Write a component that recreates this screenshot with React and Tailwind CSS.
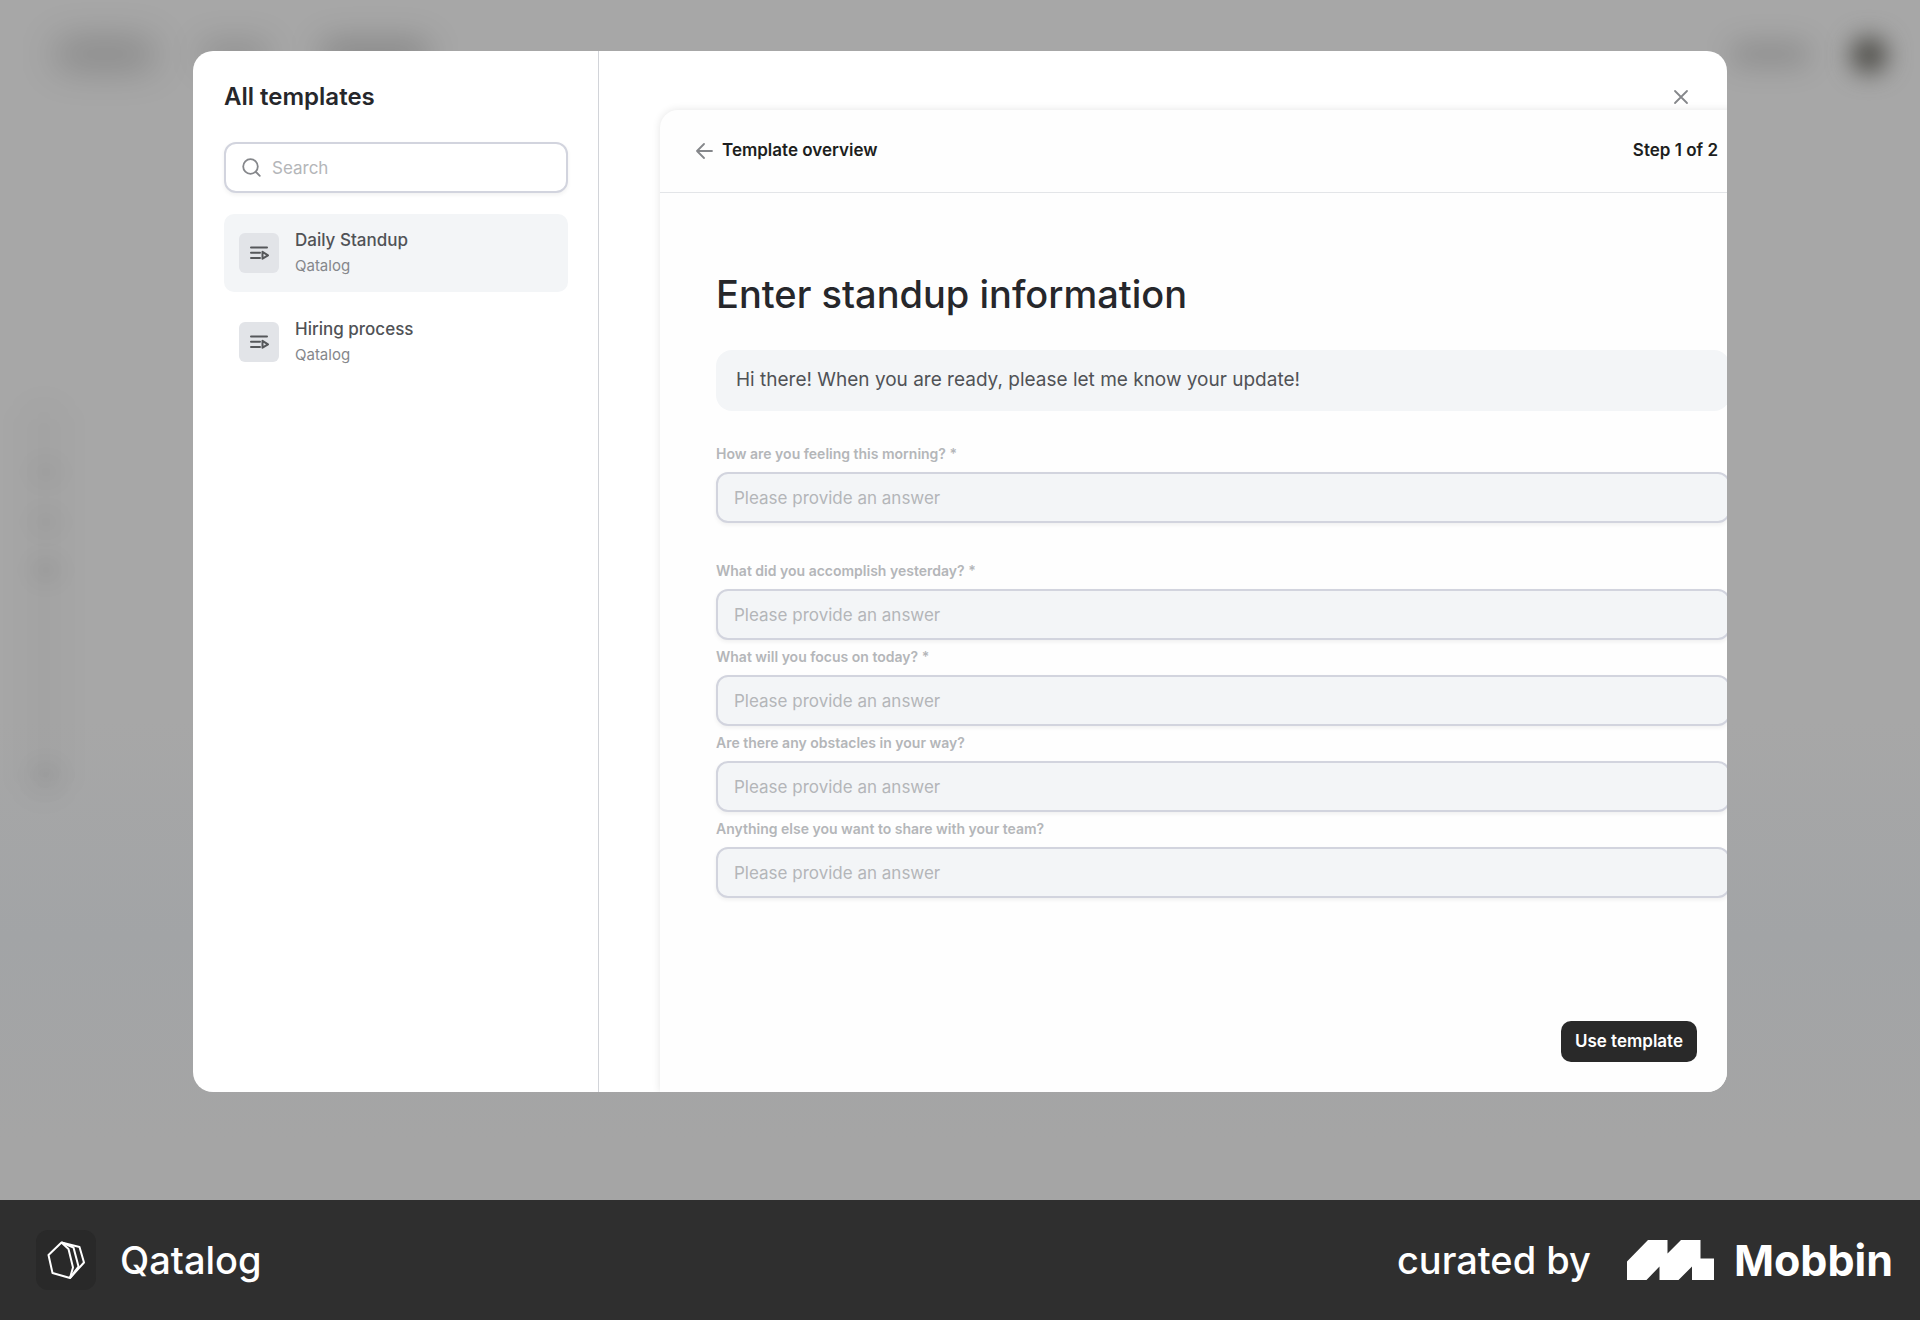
import React from "react";

const questions = [
  { id: "feeling", label: "How are you feeling this morning? *", gap: "mb-[38px]" },
  { id: "accomplish", label: "What did you accomplish yesterday? *", gap: "mb-[7px]" },
  { id: "focus", label: "What will you focus on today? *", gap: "mb-[7px]" },
  { id: "obstacles", label: "Are there any obstacles in your way?", gap: "mb-[7px]" },
  { id: "anything", label: "Anything else you want to share with your team?", gap: "" },
];

const templates = [
  { name: "Daily Standup", owner: "Qatalog", active: true },
  { name: "Hiring process", owner: "Qatalog", active: false },
];

function PlaylistIcon() {
  return (
    <svg width="20" height="20" viewBox="0 0 20 20" fill="none" stroke="#55575a" strokeWidth="2" aria-hidden="true">
      <path d="M2 4.500h16M2 9.700h9M2 14.900h9" strokeLinecap="round" />
      <path d="M13.500 8.900v6.800l5.500-3.400z" strokeLinejoin="round" />
    </svg>
  );
}

function Backdrop() {
  return (
    <div className="pointer-events-none absolute inset-0 overflow-hidden" aria-hidden="true">
      <div className="absolute left-[55px] top-[40px] h-7 w-[100px] rounded-full bg-black/20 blur-[18px]" />
      <div className="absolute left-[200px] top-[42px] h-6 w-[70px] rounded-full bg-black/15 blur-[16px]" />
      <div className="absolute left-[320px] top-[40px] h-7 w-[110px] rounded-full bg-black/20 blur-[16px]" />
      <div className="absolute right-[110px] top-[42px] h-6 w-[80px] rounded-full bg-black/15 blur-[14px]" />
      <div className="absolute right-[33px] top-[37px] h-9 w-9 rounded-full bg-[#4b4a45] blur-[12px]" />
      <div className="absolute left-[20px] top-[400px] h-[400px] w-12 rounded-full bg-black/[0.02] blur-[14px]" />
      <div className="absolute left-[32px] top-[460px] h-6 w-7 rounded-full bg-black/[0.03] blur-[10px]" />
      <div className="absolute left-[32px] top-[510px] h-6 w-7 rounded-full bg-black/[0.03] blur-[10px]" />
      <div className="absolute left-[32px] top-[558px] h-6 w-7 rounded-full bg-black/[0.05] blur-[10px]" />
      <div className="absolute left-[32px] top-[763px] h-6 w-7 rounded-full bg-black/[0.05] blur-[10px]" />
    </div>
  );
}

function Sidebar() {
  return (
    <aside className="w-[406px] shrink-0 border-r border-[#d2d4d9] pl-[31px] pr-[30px] pt-[30px]">
      <h2 className="text-2xl font-semibold text-[#26272b]">All templates</h2>
      <div className="relative mt-[29px]">
        <svg className="absolute left-[18px] top-4 z-10" width="19" height="19" viewBox="0 0 19 19" fill="none" stroke="#85878b" strokeWidth="1.8" strokeLinecap="round" aria-hidden="true">
          <circle cx="8.5" cy="8.5" r="7.3" />
          <path d="M14 14l3.8 3.8" />
        </svg>
        <input aria-label="Search" type="text" placeholder="Search" className="block h-[51px] w-full rounded-xl border-2 border-[#d2d4de] bg-white pl-[46px] pr-4 text-[17px] text-[#26272b] shadow-[0_2px_4px_rgba(0,0,0,0.06)] outline-none placeholder:text-[#b4b6b9]" />
      </div>
      <ul className="mt-[21px] flex flex-col gap-[11px]">
        {templates.map((t) => (
          <li key={t.name}>
            <button type="button" className={`flex h-[78px] w-full items-center gap-4 rounded-[10px] px-[15px] text-left ${t.active ? "bg-[#f3f5f7]" : ""}`}>
              <span className="flex size-10 items-center justify-center rounded-md bg-[#e2e4e8]">
                <PlaylistIcon />
              </span>
              <span className="flex flex-col">
                <span className="text-[17px] font-medium leading-[26px] text-[#505256]">{t.name}</span>
                <span className="text-[15px] leading-[26px] text-[#85878b]">{t.owner}</span>
              </span>
            </button>
          </li>
        ))}
      </ul>
    </aside>
  );
}

function Preview() {
  return (
    <section className="w-[calc(100%+40px)] flex-1 rounded-tl-[18px] bg-[#fefefe] shadow-[0_0_8px_rgba(0,0,0,0.11)]">
      <header className="flex h-[83px] items-center justify-between border-b border-[#e3e5e8] pl-[36px] pr-[49px] text-[17px] font-semibold text-[#1d1e20]">
        <button type="button" className="flex items-center gap-[9px]">
          <svg width="17" height="16" viewBox="0 0 17 16" fill="none" stroke="#85878b" strokeWidth="1.8" strokeLinecap="round" strokeLinejoin="round" aria-hidden="true">
            <path d="M16 8H1M8 1L1 8l7 7" />
          </svg>
          Template overview
        </button>
        <span>Step 1 of 2</span>
      </header>
      <div className="pl-[56px] pr-[37px] pt-[76px]">
        <h1 className="text-[38px] font-medium leading-[50px] text-[#26272b]">Enter standup information</h1>
        <p className="mt-[31px] flex h-[61px] items-center rounded-2xl bg-[#f3f5f7] px-5 text-[19px] text-[#505256]">
          Hi there! When you are ready, please let me know your update!
        </p>
        <form className="mt-[33px]">
          {questions.map((q) => (
            <div key={q.id} className={q.gap}>
              <label htmlFor={q.id} className="mb-2 block text-sm font-semibold leading-5 text-[#b4b6b9]">{q.label}</label>
              <input id={q.id} type="text" placeholder="Please provide an answer" className="block h-[51px] w-full rounded-xl border-2 border-[#d2d4de] bg-[#f3f5f7] px-4 text-[17px] shadow-[0_2px_4px_rgba(0,0,0,0.06)] outline-none placeholder:text-[#b4b6b9]" />
            </div>
          ))}
        </form>
      </div>
    </section>
  );
}

function Footer() {
  return (
    <footer className="flex h-[120px] items-center justify-between bg-[#2f2f2f] pl-[36px] pr-[27px] text-[38px] font-medium text-white">
      <div className="flex items-center gap-6">
        <span className="flex size-[60px] items-center justify-center rounded-xl bg-[#292929]">
          <svg width="38" height="38" viewBox="0 0 38 38" fill="none" stroke="white" strokeWidth="2" strokeLinejoin="round" role="img" aria-label="Qatalog logo">
            <path d="M14.500 1.500L1.500 14l4 18 17.500 5 3-10.500L21.500 8z" />
            <path d="M14.500 1.500L26.500 6.500l5 19L23 37" />
            <path d="M14.500 1.500L32.500 6l4.500 15.500L23 37" />
          </svg>
        </span>
        <span>Qatalog</span>
      </div>
      <div className="flex items-center">
        <span>curated by</span>
        <svg className="ml-9" width="87" height="40" viewBox="0 0 87 40" fill="white" aria-hidden="true">
          <path d="M0 21.500L21 0H40.500V13.500L54 0H73.500V18.500H87V40H65V26.500L51.500 40H32.500V26.500L19.500 40H0z" />
        </svg>
        <span className="ml-5 text-[43px] font-bold">Mobbin</span>
      </div>
    </footer>
  );
}

export default function App() {
  return (
    <div className="flex min-h-screen flex-col font-['Inter',sans-serif]">
      <main className="relative flex flex-1 bg-[linear-gradient(#a7a7a7_60%,#a2a4a6_78%,#a5a5a5_95%)] px-[193px] pb-[108px] pt-[51px]">
        <Backdrop />
        <div role="dialog" aria-label="All templates" className="relative flex flex-1 overflow-hidden rounded-[20px] bg-white">
          <Sidebar />
          <div className="flex min-w-0 flex-1 flex-col pl-[61px]">
            <div className="flex h-[59px] shrink-0 justify-end pr-[38px] pt-[38px]">
              <button type="button" aria-label="Close" className="size-4">
                <svg width="16" height="16" viewBox="0 0 16 16" stroke="#85878b" strokeWidth="1.8" strokeLinecap="round" aria-hidden="true">
                  <path d="M2 2l12 12M14 2L2 14" />
                </svg>
              </button>
            </div>
            <Preview />
          </div>
          <button type="button" className="absolute bottom-[30px] right-[30px] h-[41px] rounded-[10px] bg-[#292929] px-3.5 text-[17px] font-semibold text-white">
            Use template
          </button>
        </div>
      </main>
      <Footer />
    </div>
  );
}
